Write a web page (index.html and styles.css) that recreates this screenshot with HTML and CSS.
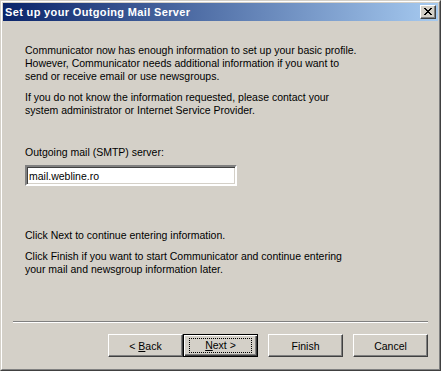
FILE: index.html
```html
<!DOCTYPE html>
<html>
<head>
    <link rel="stylesheet" href="styles.css">
</head>
<body>
    <div class="window">
        <div class="frame">
            <div class="titlebar">
                <span class="title">Set up your Outgoing Mail Server</span>
                <button class="close-button">
                    <svg class="close-icon" viewBox="0 0 8 7" shape-rendering="crispEdges">
                        <path d="M0 0h2v1h-2z M6 0h2v1h-2z M1 1h2v1h-2z M5 1h2v1h-2z M2 2h4v1h-4z M3 3h2v1h-2z M2 4h4v1h-4z M1 5h2v1h-2z M5 5h2v1h-2z M0 6h2v1h-2z M6 6h2v1h-2z" fill="#000"/>
                    </svg>
                </button>
            </div>

            <div class="content">
                <p>Communicator now has enough information to set up your basic profile. However, Communicator needs additional information if you want to send or receive email or use newsgroups.</p>
                <p>If you do not know the information requested, please contact your system administrator or Internet Service Provider.</p>

                <label class="field-label" for="smtpField">Outgoing mail (SMTP) server:</label>
                <input type="text" id="smtpField" class="field" value="mail.webline.ro">

                <p class="next-hint">Click Next to continue entering information.</p>
                <p>Click Finish if you want to start Communicator and continue entering your mail and newsgroup information later.</p>
            </div>

            <div class="separator"></div>

            <div class="button-row">
                <button class="btn"><span>&lt; <u>B</u>ack</span></button>
                <button class="btn btn-default"><span class="focus"><u>N</u>ext &gt;</span></button>
                <button class="btn btn-spaced"><span>Finish</span></button>
                <button class="btn btn-spaced"><span>Cancel</span></button>
            </div>
        </div>
    </div>
</body>
</html>
```

FILE: styles.css
```css
html, body {
    margin: 0;
    padding: 0;
    width: 441px;
    height: 371px;
    overflow: hidden;
    background: #d4d0c8;
}

body {
    font-family: 'Liberation Sans', Arial, sans-serif;
    font-size: 10.5px;
    color: #000;
}

.window {
    box-sizing: border-box;
    width: 441px;
    height: 371px;
    border: 1px solid;
    border-color: #d4d0c8 #404040 #404040 #d4d0c8;
}

.frame {
    box-sizing: border-box;
    height: 100%;
    border: 1px solid;
    border-color: #fff #808080 #808080 #fff;
    padding: 1px;
    display: flex;
    flex-direction: column;
}

.titlebar {
    height: 18px;
    display: flex;
    align-items: center;
    justify-content: space-between;
    padding: 0 2px 0 2px;
    background: linear-gradient(to right, #0a246a, #a6caf0);
}

.title {
    color: #fff;
    font-weight: bold;
    font-size: 11px;
    letter-spacing: 0.35px;
}

.close-button {
    box-sizing: border-box;
    width: 16px;
    height: 14px;
    padding: 0;
    background: #d4d0c8;
    border: 1px solid;
    border-color: #fff #404040 #404040 #fff;
    box-shadow: inset -1px -1px 0 #808080;
    display: flex;
    align-items: center;
    justify-content: center;
}

.close-icon {
    width: 8px;
    height: 7px;
    margin: 0 1px 1px 0;
}

.content {
    flex: 1;
    width: 338px;
    padding: 23px 0 0 22px;
    line-height: 13px;
}

.content p {
    margin: 0 0 8px 0;
}

.field-label {
    display: block;
    margin-top: 29px;
}

.field {
    display: block;
    box-sizing: border-box;
    width: 212px;
    height: 21px;
    margin-top: 6px;
    padding: 0 2px;
    font-family: 'Liberation Sans', Arial, sans-serif;
    font-size: 10.5px;
    color: #000;
    background: #fff;
    border: 2px solid;
    border-color: #808080 #fff #fff #808080;
    box-shadow: inset 1px 1px 0 #404040, inset -1px -1px 0 #d4d0c8;
    outline: none;
}

.content .next-hint {
    margin-top: 43px;
}

.separator {
    margin: 0 10px;
    height: 0;
    border-top: 1px solid #808080;
    border-bottom: 1px solid #fff;
}

.button-row {
    display: flex;
    justify-content: flex-end;
    padding: 11px 10px 11px 10px;
}

.btn {
    box-sizing: border-box;
    width: 75px;
    height: 23px;
    padding: 0;
    font-family: 'Liberation Sans', Arial, sans-serif;
    font-size: 10.5px;
    color: #000;
    background: #d4d0c8;
    border: 1px solid;
    border-color: #fff #404040 #404040 #fff;
    box-shadow: inset -1px -1px 0 #808080;
    display: flex;
    align-items: center;
    justify-content: center;
}

.btn-default {
    border: 1px solid #000;
    box-shadow: inset 1px 1px 0 #fff, inset -1px -1px 0 #404040, inset -2px -2px 0 #808080;
}

.btn-spaced {
    margin-left: 10px;
}

.focus {
    box-sizing: border-box;
    width: 63px;
    height: 15px;
    line-height: 13px;
    border: 1px dotted #000;
    text-align: center;
}
```
